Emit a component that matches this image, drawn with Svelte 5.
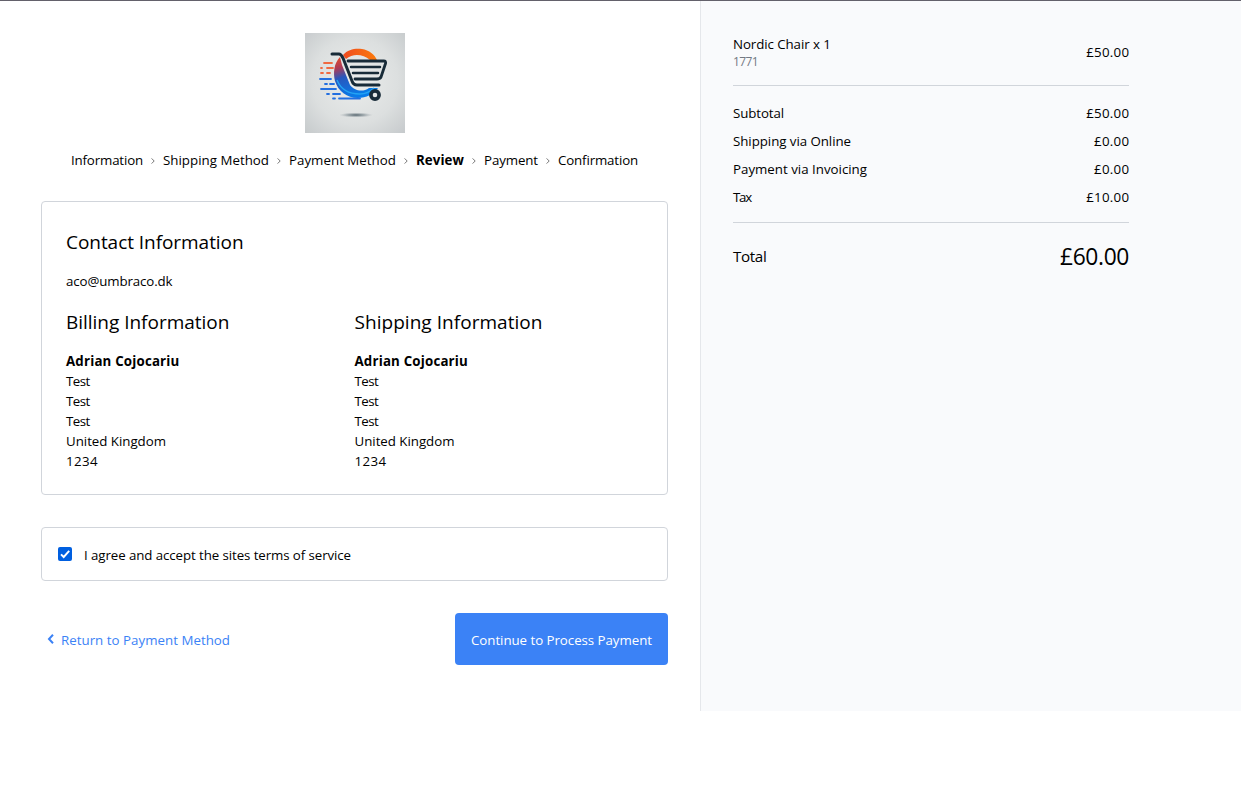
<script>
  const steps = [
    { label: 'Information', track: -0.157 },
    { label: 'Shipping Method', track: 0.019 },
    { label: 'Payment Method', track: 0.027 },
    { label: 'Review', track: 0.084, current: true },
    { label: 'Payment', track: -0.103 },
    { label: 'Confirmation', track: -0.145 }
  ];
  const addresses = [
    { title: 'Billing Information', track: -0.02 },
    { title: 'Shipping Information', track: 0.042 }
  ];
  const lines = ['Test', 'Test', 'Test'];
  const totals = [
    { label: 'Subtotal', value: '£50.00', track: -0.1 },
    { label: 'Shipping via Online', value: '£0.00', track: -0.05 },
    { label: 'Payment via Invoicing', value: '£0.00', track: 0 },
    { label: 'Tax', value: '£10.00', track: -1.2 }
  ];
  let agreed = $state(true);
</script>

<div class="page">
  <main>
    <svg class="logo" viewBox="0 0 100 100" aria-label="Shop logo">
      <defs>
        <radialGradient id="bg" cx=".5" cy=".48" r=".72">
          <stop offset="0" stop-color="#ebedec" /><stop offset=".6" stop-color="#dcdfdf" /><stop offset="1" stop-color="#c6cacc" />
        </radialGradient>
        <linearGradient id="ring" x1="0" y1="0" x2=".35" y2="1">
          <stop offset="0" stop-color="#ed4b25" /><stop offset=".28" stop-color="#a83b5a" /><stop offset=".5" stop-color="#2857bd" /><stop offset="1" stop-color="#087be9" />
        </linearGradient>
        <linearGradient id="arc"><stop offset="0" stop-color="#f04b20" /><stop offset="1" stop-color="#fb7b0b" /></linearGradient>
        <radialGradient id="shade"><stop offset="0" stop-color="#51616a" /><stop offset=".5" stop-color="#879399" stop-opacity=".7" /><stop offset="1" stop-color="#aeb4b8" stop-opacity="0" /></radialGradient>
      </defs>
      <rect width="100" height="100" fill="url(#bg)" />
      <ellipse cx="51" cy="82" rx="17" ry="2.6" fill="url(#shade)" />
      <path d="M38 22C43 16 51 15 57 16C64 17 70 22 72 27H65C58 21 48 20 41 26Z" fill="url(#arc)" />
      <path d="M35 24C29 30 28 40 30 48C33 58 42 65 53 65C61 65 69 61 73 55H64C57 60 49 57 45 52L37 32Z" fill="url(#ring)" />
      <path d="M32 47C36 57 45 61 55 61C61 61 66 58 69 55" fill="none" stroke="#23a3f3" stroke-width="1.4" />
      <g fill="none" stroke-linecap="round" stroke-width="1.8">
        <path d="M19 30H27M16 35H17M22 35H28M16 40H18M22 40H25" stroke="#f06a42" />
        <path d="M15 46H26M20 51H22M25 51H29M16 56H31M22 61H24M28 61H35M28 65.5H30M34 65.5H55" stroke="#236fe0" />
      </g>
      <g fill="none" stroke="#182b38" stroke-linecap="round" stroke-linejoin="round">
        <path d="M27 21H34C36 21 37 23 38 25L47 48C48 51 49 52 52 52H74" stroke-width="3" />
        <path d="M43 28H79C81 28 81 30 80 32L76 44C75 46 74 46 72 46H50" stroke-width="2.8" />
        <path d="M46 34H75M48 40H73" stroke-width="2.5" />
        <circle cx="70" cy="62" r="4.1" stroke-width="3.6" />
      </g>
    </svg>

    <nav>
      {#each steps as step, i}
        {#if i > 0}
          <svg class="sep" viewBox="0 0 4 6"><path d="M.6.4L3.2 3L.6 5.6" /></svg>
        {/if}
        <span class:current={step.current} style:letter-spacing="{step.track}px">{step.label}</span>
      {/each}
    </nav>

    <section class="card details">
      <h2>Contact Information</h2>
      <p class="email">aco@umbraco.dk</p>
      <div class="columns">
        {#each addresses as address}
          <div>
            <h2 style:letter-spacing="{address.track}px">{address.title}</h2>
            <p class="name">Adrian Cojocariu</p>
            {#each lines as line}<p class="line">{line}</p>{/each}
            <p>United Kingdom</p>
            <p class="postcode">1234</p>
          </div>
        {/each}
      </div>
    </section>

    <label class="card terms">
      <input type="checkbox" bind:checked={agreed} />
      <svg class="box" class:off={!agreed} viewBox="0 0 14 14">
        <rect width="14" height="14" rx="2" /><path d="M3 7.3L5.7 10L11.2 3.8" />
      </svg>
      <span>I agree and accept the sites terms of service</span>
    </label>

    <div class="actions">
      <a href="#back"><svg viewBox="0 0 8 10"><path d="M6 .8L2 5L6 9.2" /></svg>Return to Payment Method</a>
      <button type="button">Continue to Process Payment</button>
    </div>
  </main>

  <aside>
    <div class="product">
      <div><p class="item">Nordic Chair x 1</p><p class="sku">1771</p></div>
      <span class="price">£50.00</span>
    </div>
    <div class="totals">
      {#each totals as row}
        <div class="row"><span style:letter-spacing="{row.track}px">{row.label}</span><span class="price">{row.value}</span></div>
      {/each}
    </div>
    <div class="grand"><span class="total">Total</span><span class="amount">£60.00</span></div>
  </aside>
</div>

<style>
  :global(body) { background: #fff; }
  .page { box-sizing: border-box; display: grid; grid-template-columns: 700px 1fr; height: 711px; border-top: 1px solid #63616b; font: 13.3px/20px "Open Sans", "Noto Sans", sans-serif; color: #000; }
  main { display: flex; flex-direction: column; padding: 32px 32px 0 41px; }
  .logo { width: 100px; height: 100px; align-self: center; display: block; }
  nav { display: flex; justify-content: center; align-items: center; gap: 8px; height: 20px; margin-top: 17px; white-space: nowrap; }
  .sep { width: 4px; height: 6px; margin-top: 2px; fill: none; stroke: #777; stroke-width: 1; }
  .current { font-weight: 700; }
  .card { box-sizing: border-box; border: 1px solid #d1d5db; border-radius: 4px; }
  .details { height: 294px; margin-top: 31px; padding: 24px; }
  h2 { margin: 0; font-size: 19px; line-height: 28px; font-weight: 400; letter-spacing: -.05px; padding-top: 2px; }
  p { margin: 0; letter-spacing: -.023px; }
  .email { margin-top: 15px; letter-spacing: -.12px; }
  .columns { display: grid; grid-template-columns: 1fr 1fr; margin-top: 15px; }
  .name { font-weight: 700; letter-spacing: .18px; margin-top: 15px; }
  .line { letter-spacing: -.52px; }
  .postcode { letter-spacing: .4px; }
  .terms { display: flex; align-items: center; height: 54px; margin-top: 32px; padding: 0 16px; letter-spacing: -.087px; }
  .terms input { appearance: none; width: 0; height: 0; margin: 0; }
  .terms span { margin: 2px 0 0 12px; }
  .box { width: 14px; height: 14px; }
  .box rect { fill: #005fe0; }
  .box path { fill: none; stroke: #fff; stroke-width: 1.9; }
  .off path { display: none; }
  .off rect { fill: #fff; stroke: #767676; }
  .actions { display: flex; justify-content: space-between; align-items: center; margin-top: 32px; }
  a { display: flex; align-items: center; padding: 2px 0 0 6px; color: #3b82f6; text-decoration: none; letter-spacing: .024px; }
  a svg { width: 8px; height: 10px; margin: -2px 6px 0 0; fill: none; stroke: #3b82f6; stroke-width: 2; }
  button { width: 213px; height: 52px; padding: 2px 0 0; border: 0; border-radius: 4px; background: #3b82f6; color: #fff; font: inherit; letter-spacing: -.043px; }
  aside { border-left: 1px solid #e5e7eb; background: #f9fafc; padding: 32px 112px 0 32px; }
  .product, .row, .grand { display: flex; justify-content: space-between; align-items: center; }
  .product { box-sizing: border-box; height: 53px; padding: 2px 0 16px; border-bottom: 1px solid #d1d5db; }
  .product > div { padding-bottom: 2px; }
  .item { line-height: 20px; letter-spacing: -.08px; }
  .sku { color: #737983; font-size: 12px; line-height: 15px; letter-spacing: -.6px; }
  .price { letter-spacing: .25px; margin-right: -.25px; }
  .totals { box-sizing: border-box; height: 137px; padding-top: 17px; border-bottom: 1px solid #d1d5db; }
  .row { margin-bottom: 8px; }
  .grand { height: 68px; }
  .total { font-size: 15.2px; letter-spacing: -.35px; padding-bottom: 2px; }
  .amount { font-size: 22.8px; letter-spacing: -.36px; }
</style>
